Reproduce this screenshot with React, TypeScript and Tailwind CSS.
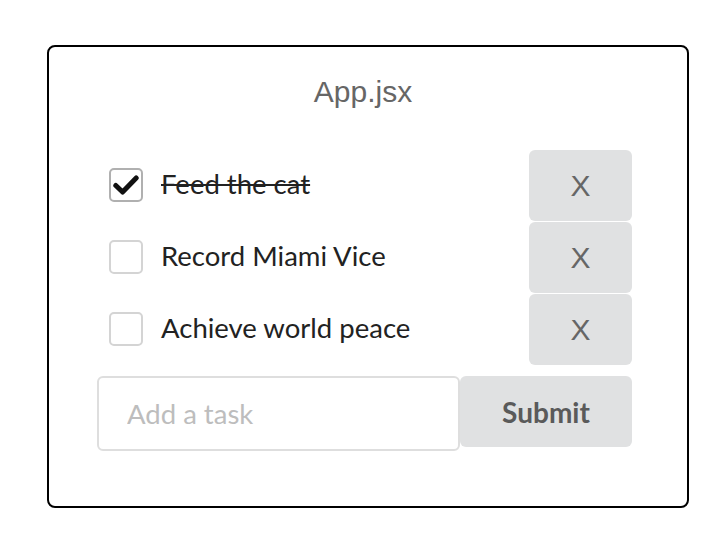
import { useState } from 'react'

type Task = { id: number; text: string; done: boolean }

const initial: Task[] = [
  { id: 1, text: 'Feed the cat', done: true },
  { id: 2, text: 'Record Miami Vice', done: false },
  { id: 3, text: 'Achieve world peace', done: false },
]

function Check({ checked }: { checked: boolean }) {
  return (
    <span
      className={`flex h-[34px] w-[34px] shrink-0 items-center justify-center rounded-[5px] border-2 bg-white ${checked ? 'border-[#b0b0b0]' : 'border-[#d4d4d4]'}`}
    >
      {checked && (
        <svg viewBox="0 0 26 20" className="h-[20px] w-[26px]">
          <path d="M2.8 10.5l6.8 6.5L23.2 3" fill="none" stroke="#111" strokeWidth="5" strokeLinecap="round" strokeLinejoin="round" />
        </svg>
      )}
    </span>
  )
}

export default function App() {
  const [tasks] = useState(initial)

  return (
    <div className="h-[545px] w-[725px] bg-white pl-[47px] pt-[45px]">
      <div className="h-[463px] w-[642px] rounded-lg border-2 border-black pt-[27px]">
        <h1 className="pr-[10px] text-center text-[30px] leading-[36px] text-[#666] font-['Liberation_Sans',sans-serif]">
          App.jsx
        </h1>

        <div className="mt-[39px] ml-[48px] w-[535px]">
          {tasks.map((t) => (
            <div key={t.id} className="flex h-[72px] items-center pl-[12px]">
              <Check checked={t.done} />
              <span
                className={`ml-[18px] flex-1 pb-[3px] text-[27.5px] text-[#222] font-['Lato',sans-serif] ${t.done ? 'line-through decoration-[2px]' : ''}`}
              >
                {t.text}
              </span>
              <button className="h-[71px] w-[103px] rounded-[6px] bg-[#e0e1e2] text-[30px] text-[#666] font-['Liberation_Sans',sans-serif]">
                X
              </button>
            </div>
          ))}

          <div className="mt-[11px] flex items-start">
            <input
              placeholder="Add a task"
              className="h-[75px] w-[363px] rounded-[6px] border-2 border-[#dedede] px-[28px] text-[27.5px] text-[#222] outline-none placeholder:text-[#bdbdbd] font-['Lato',sans-serif]"
            />
            <button className="h-[71px] w-[172px] rounded-[6px] bg-[#e0e1e2] text-[28px] font-bold text-[#5a5a5a] font-['Lato',sans-serif]">
              Submit
            </button>
          </div>
        </div>
      </div>
    </div>
  )
}
